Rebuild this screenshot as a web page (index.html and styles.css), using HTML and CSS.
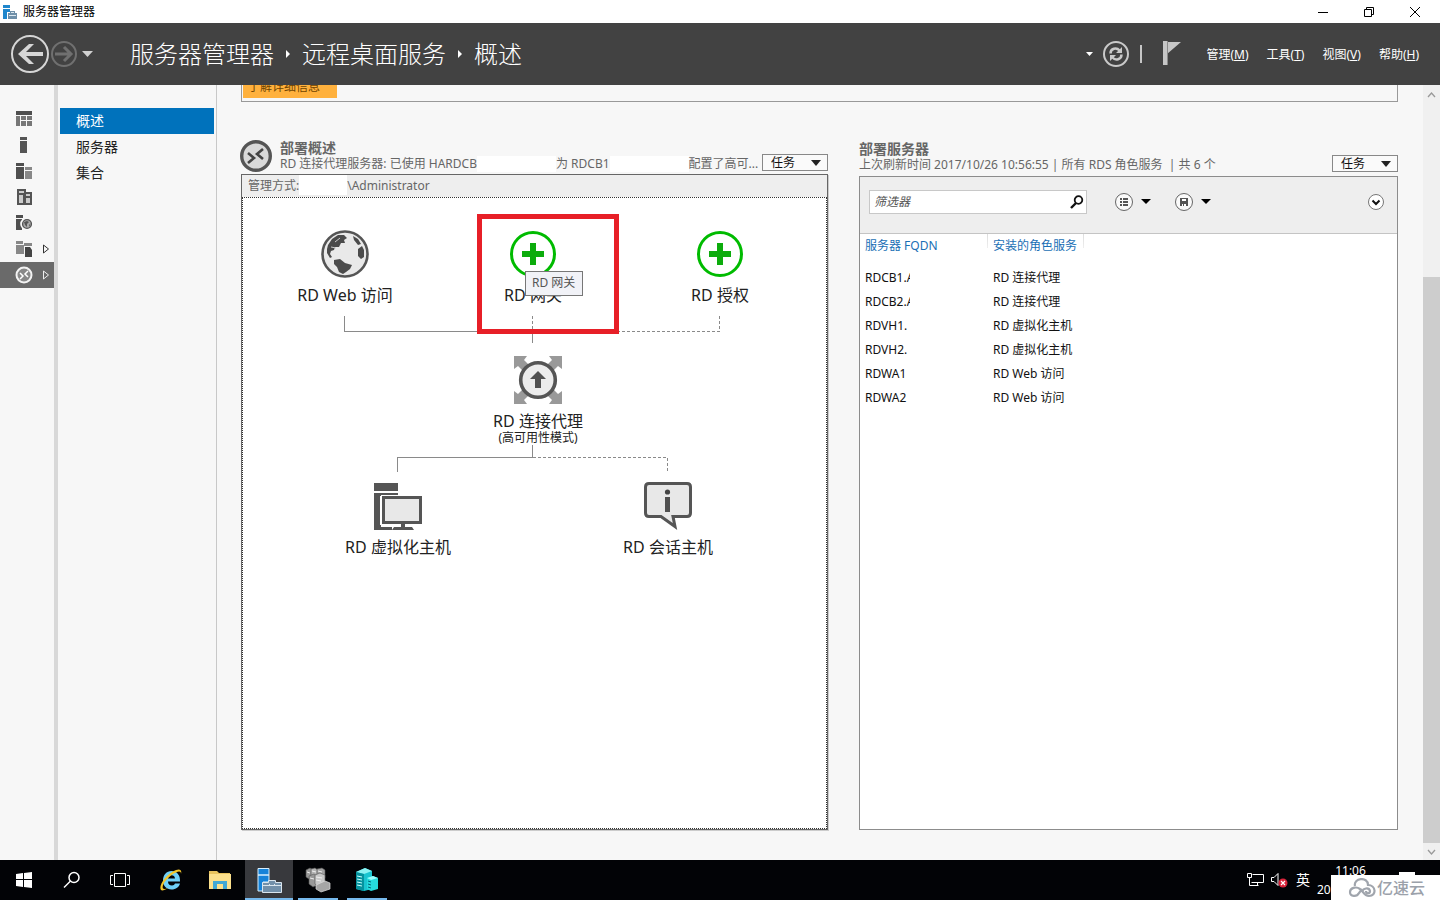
FILE: index.html
```html
<!DOCTYPE html>
<html lang="zh-CN">
<head>
<meta charset="utf-8">
<title>服务器管理器</title>
<link rel="stylesheet" href="styles.css">
</head>
<body>
<div class="window">
  <div class="titlebar">
    <svg class="app-icon" width="14" height="14" viewBox="0 0 14 14"><path fill="#1f86cc" d="M0 0h7v3H0zM0 4h7v3H4v7H0z"/><path fill="#6f8fa8" d="M5 8h2V6h5v2h2v6H5z"/><path fill="#dce8f0" d="M8 7h3v1H8zM6 10h7v1H6z"/></svg>
    <span class="window-title">服务器管理器</span>
    <div class="window-buttons">
      <button aria-label="最小化"><svg width="12" height="12" viewBox="0 0 12 12"><path d="M1 6.500h10" stroke="#000" fill="none"/></svg></button>
      <button aria-label="还原"><svg width="12" height="12" viewBox="0 0 12 12"><path d="M1.500 3.500h7v7h-7zM3.500 3.500v-2h7v7h-2" stroke="#000" fill="none"/></svg></button>
      <button aria-label="关闭"><svg width="12" height="12" viewBox="0 0 12 12"><path d="M1 1l10 10M11 1L1 11" stroke="#000" fill="none"/></svg></button>
    </div>
  </div>

  <header class="header">
    <div class="nav-buttons">
      <button aria-label="后退"><svg width="40" height="40" viewBox="0 0 40 40"><circle cx="20" cy="20" r="18" fill="none" stroke="#d6d6d6" stroke-width="2"/><path d="M19 10h5l-8 8h17v4H16l8 8h-5L8 20z" fill="#d6d6d6"/></svg></button>
      <button aria-label="前进"><svg width="28" height="28" viewBox="0 0 28 28"><circle cx="14" cy="14" r="12" fill="none" stroke="#707070" stroke-width="2"/><path d="M5 14h16M14 7l7 7-7 7" fill="none" stroke="#707070" stroke-width="3"/></svg></button>
      <button class="history" aria-label="历史记录"><svg width="12" height="8" viewBox="0 0 12 8"><path d="M0 1h11L5.500 7z" fill="#d0d0d0"/></svg></button>
    </div>
    <nav class="breadcrumb" aria-label="位置">
      <span>服务器管理器</span>
      <svg width="6" height="8" viewBox="0 0 6 8"><path d="M1 0l4 4-4 4z" fill="#fff"/></svg>
      <span>远程桌面服务</span>
      <svg width="6" height="8" viewBox="0 0 6 8"><path d="M1 0l4 4-4 4z" fill="#fff"/></svg>
      <span>概述</span>
    </nav>
    <div class="header-tools">
      <svg width="8" height="6" viewBox="0 0 8 6"><path d="M0 1h7L3.500 5z" fill="#fff"/></svg>
      <button aria-label="刷新"><svg width="28" height="28" viewBox="0 0 28 28"><circle cx="14" cy="14" r="12" fill="none" stroke="#c9c9c9" stroke-width="2"/><path d="M8.500 13.500c0-5 6-6.500 9-3M19.500 14.500c0 5-6 6.500-9 3" fill="none" stroke="#c9c9c9" stroke-width="2.500"/><path d="M20 7v6h-6zM8 21v-6h6z" fill="#c9c9c9"/></svg></button>
      <span class="divider"></span>
      <button class="flag" aria-label="通知"><svg width="18" height="26" viewBox="0 0 18 26"><path d="M0 0h4v24H0zM4 1h14L4 13z" fill="#c6c6c6"/><path d="M4.500 0v24" stroke="#8a8a8a"/></svg></button>
    </div>
    <div class="menus">
      <button>管理(<u>M</u>)</button>
      <button>工具(<u>T</u>)</button>
      <button>视图(<u>V</u>)</button>
      <button>帮助(<u>H</u>)</button>
    </div>
  </header>

  <div class="body">
    <nav class="rail" aria-label="角色">
      <button aria-label="仪表板"><svg width="16" height="16" viewBox="0 0 16 16"><path fill="#4f4f4f" d="M0 0h16v4H0z"/><path fill="#777" d="M0 5h4v10H0zM5 5h5v4H5zM11 5h5v4h-5zM5 10h5v5H5zM11 10h5v5h-5z"/></svg></button>
      <button aria-label="本地服务器"><svg width="16" height="16" viewBox="0 0 16 16"><path fill="#555" d="M4 0h7v3H4zM4 4h7v12H4z"/></svg></button>
      <button aria-label="所有服务器"><svg width="16" height="16" viewBox="0 0 16 16"><path fill="#4f4f4f" d="M0 0h8v3H0zM0 4h8v12H0z"/><path fill="#888" d="M9 4h7v3H9zM9 8h7v8H9z"/></svg></button>
      <button aria-label="AD DS"><svg width="16" height="16" viewBox="0 0 16 16"><path fill="#555" d="M1 0h9v3h6v13H1z"/><path fill="#ccc" d="M3 2h5v2H3zM3 6h4v8H3zM10 5h4v2h-4zM10 9h4v5h-4z"/></svg></button>
      <button aria-label="文件和存储"><svg width="16" height="16" viewBox="0 0 16 16"><path fill="#4f4f4f" d="M0 0h7v3H0zM0 4h6v11H0z"/><circle cx="10.500" cy="9" r="6.300" fill="#f7f7f7"/><circle cx="11" cy="9" r="4.400" fill="#aaa" stroke="#555" stroke-width="1.400"/><path fill="#555" d="M8 7l3-1 2 1-2 2v3l-2-2zM13 9l1 1-1 2z"/></svg></button>
      <button aria-label="文件服务" class="has-more"><svg width="16" height="16" viewBox="0 0 16 16"><path fill="#888" d="M0 0h7v3H0zM0 4h8v9H0zM8 2h8v4H8z"/><path fill="#f7f7f7" d="M8 5h8v11H8z"/><path fill="#444" d="M9 6h5l2 3v7H9z"/></svg><svg class="more" width="8" height="10" viewBox="0 0 8 10"><path d="M1.500 1l5 4-5 4z" fill="none" stroke="#333"/></svg></button>
      <button aria-label="远程桌面服务" class="has-more current"><svg width="18" height="18" viewBox="0 0 18 18"><circle cx="9" cy="9" r="7.500" fill="#888" stroke="#f3f3f3" stroke-width="2"/><path d="M5 7l3 3-3 3M13 5l-3 3 3 3" fill="none" stroke="#fff" stroke-width="1.500"/></svg><svg class="more" width="8" height="10" viewBox="0 0 8 10"><path d="M1.500 1l5 4-5 4z" fill="none" stroke="#eee"/></svg></button>
    </nav>

    <nav class="pages" aria-label="远程桌面服务">
      <a href="#overview" class="current">概述</a>
      <a href="#servers">服务器</a>
      <a href="#collections">集合</a>
    </nav>

    <main class="content">
      <div class="banner"><button>了解详细信息</button></div>
      <div class="columns">
        <section class="overview">
          <div class="section-head">
            <svg class="section-icon" width="32" height="32" viewBox="0 0 32 32"><circle cx="16" cy="16" r="14.300" fill="#d9d9d9" stroke="#555" stroke-width="3.400"/><path d="M8 13l6 5-6 5M23 9l-6 5 6 5" fill="none" stroke="#444" stroke-width="2.600"/></svg>
            <div class="section-text">
              <h2>部署概述</h2>
              <p>RD 连接代理服务器: 已使用 HARDCB<span class="blank wide"></span>为 RDCB1<span class="blank wide"></span>配置了高可...</p>
            </div>
            <button class="tasks">任务<svg width="10" height="6" viewBox="0 0 10 6"><path d="M0 0h10L5 6z" fill="#222"/></svg></button>
          </div>
          <div class="panel overview-panel">
            <div class="manage">管理方式:<span class="blank small"></span>\Administrator</div>
            <div class="diagram">
              <svg class="wires" width="500" height="290" viewBox="0 0 500 290" fill="none" stroke="#8a8a8a" shape-rendering="crispEdges">
                <path d="M101.500 118v15.500H289.500V145M289.500 247v12.500H154.500V274"/>
                <path d="M289.500 118v15M476.500 118v15.500H290M290 259.500H424.500V274" stroke-dasharray="3 2"/>
              </svg>
              <div class="node web">
                <svg width="48" height="48" viewBox="0 0 48 48"><circle cx="24" cy="24" r="22.500" fill="#e9e9e9" stroke="#555" stroke-width="2.600"/><g fill="#4b4b4b"><path d="M7 15l4-6 6-4 6 0 3 3-3 2 1 3-4 0-2 4-4 0-1 3-3 1-1 3 2 3-2 1-3-5 0-4z"/><path d="M13 30l6-1 5 4 7 2-2 4-4 3-3 2-4-2-2-5-3-3z"/><path d="M32 6l5 3 3 5-3 1-4-5zM37 19l4-3 2 4v7l-3 2-3-3z"/></g><path d="M14 12l5-4M10 17l5 1" stroke="#ccc"/></svg>
                <span>RD Web 访问</span>
              </div>
              <div class="node gateway">
                <svg width="48" height="48" viewBox="0 0 48 48"><circle cx="24" cy="24" r="21.500" fill="#fff" stroke="#0b0" stroke-width="3"/><path d="M21 13h6v8h8v6h-8v8h-6v-8h-8v-6h8z" fill="#0cac0c"/></svg>
                <span>RD 网关</span>
              </div>
              <div class="node licence">
                <svg width="48" height="48" viewBox="0 0 48 48"><circle cx="24" cy="24" r="21.500" fill="#fff" stroke="#0b0" stroke-width="3"/><path d="M21 13h6v8h8v6h-8v8h-6v-8h-8v-6h8z" fill="#0cac0c"/></svg>
                <span>RD 授权</span>
              </div>
              <div class="node broker">
                <svg width="48" height="48" viewBox="0 0 48 48"><path fill="#999" d="M0 0h13l-3 4 8 8-6 6-8-8-4 3zM48 0v13l-4-3-8 8-6-6 8-8-3-4zM0 48V35l4 3 8-8 6 6-8 8 3 4zM48 48H35l3-4-8-8 6-6 8 8 4-3z"/><circle cx="24" cy="24" r="17.300" fill="#ececec" stroke="#555" stroke-width="3.600"/><path d="M24 15l8 8h-5v9h-6v-9h-5z" fill="#505050"/></svg>
                <span>RD 连接代理</span><small>(高可用性模式)</small>
              </div>
              <div class="node virtual">
                <svg width="48" height="48" viewBox="0 0 48 48"><path fill="#555" d="M0 1h24v8H0zM0 11h24v3H6v29h12v5H0z"/><path fill="#fff" d="M7 13h41v32H7z"/><path fill="#555" d="M8 14h40v28H31v3h7l2 3H18l2-3h7v-3H8z"/><path fill="#e8e8e8" d="M11 17h34v22H11z"/></svg>
                <span>RD 虚拟化主机</span>
              </div>
              <div class="node session">
                <svg width="48" height="48" viewBox="0 0 48 48"><path d="M5 1.500h38q3.500 0 3.500 3.500v26q0 3.500-3.500 3.500H29l2 10-14-10H5q-3.500 0-3.500-3.500V5q0-3.500 3.500-3.500z" fill="#e8e8e8" stroke="#555" stroke-width="3"/><circle cx="23.500" cy="10" r="2.600" fill="#444"/><path d="M21 15h5v15h-5z" fill="#505050"/></svg>
                <span>RD 会话主机</span>
              </div>
              <div class="highlight"></div>
              <div class="tooltip" role="tooltip">RD 网关</div>
            </div>
          </div>
        </section>

        <section class="servers">
          <div class="section-head">
            <div class="section-text">
              <h2>部署服务器</h2>
              <p>上次刷新时间 2017/10/26 10:56:55 | 所有 RDS 角色服务&nbsp; | 共 6 个</p>
            </div>
            <button class="tasks">任务<svg width="10" height="6" viewBox="0 0 10 6"><path d="M0 0h10L5 6z" fill="#222"/></svg></button>
          </div>
          <div class="panel">
            <div class="toolbar">
              <div class="search">
                <input type="text" placeholder="筛选器" aria-label="筛选器">
                <svg width="14" height="14" viewBox="0 0 14 14"><circle cx="8.500" cy="5" r="3.800" fill="none" stroke="#111" stroke-width="1.800"/><path d="M6 8l-5 5" stroke="#111" stroke-width="2.400"/></svg>
              </div>
              <button class="tool" aria-label="查询条件"><svg width="20" height="20" viewBox="0 0 20 20"><circle cx="10" cy="10" r="8.500" fill="#fafafa" stroke="#666"/><path fill="#555" d="M6 6h2v2H6zM6 9h2v2H6zM6 12h2v2H6zM9 6h5v2H9zM9 9h5v2H9zM9 12h5v2H9z"/></svg><svg width="10" height="6" viewBox="0 0 10 6"><path d="M0 0h10L5 5z"/></svg></button>
              <button class="tool" aria-label="保存查询"><svg width="20" height="20" viewBox="0 0 20 20"><circle cx="10" cy="10" r="8.500" fill="#fafafa" stroke="#666"/><path fill="#555" d="M6 6h8v8H6z"/><path fill="#fff" d="M8 7h4v2H8zM8 12h1v2H8zM10 12h2v2h-2z"/></svg><svg width="10" height="6" viewBox="0 0 10 6"><path d="M0 0h10L5 5z"/></svg></button>
              <button class="expand" aria-label="展开"><svg width="18" height="18" viewBox="0 0 18 18"><circle cx="9" cy="9" r="7.500" fill="#fff" stroke="#777"/><path d="M5.500 7.500L9 11l3.500-3.500" fill="none" stroke="#111" stroke-width="2"/></svg></button>
            </div>
            <table>
              <thead><tr><th class="fqdn">服务器 FQDN</th><th class="role">安装的角色服务</th><th aria-label="其他"></th></tr></thead>
              <tbody>
                <tr><td><span class="cut">RDCB1.A</span></td><td>RD 连接代理</td><td></td></tr>
                <tr><td><span class="cut">RDCB2.A</span></td><td>RD 连接代理</td><td></td></tr>
                <tr><td>RDVH1.</td><td>RD 虚拟化主机</td><td></td></tr>
                <tr><td>RDVH2.</td><td>RD 虚拟化主机</td><td></td></tr>
                <tr><td>RDWA1</td><td>RD Web 访问</td><td></td></tr>
                <tr><td>RDWA2</td><td>RD Web 访问</td><td></td></tr>
              </tbody>
            </table>
          </div>
        </section>
      </div>
    </main>
    <div class="scrollbar">
      <svg width="9" height="6" viewBox="0 0 9 6"><path d="M1 5l3.500-4L8 5" fill="none" stroke="#999" stroke-width="1.300"/></svg>
      <div class="track"><div class="thumb"></div></div>
      <svg width="9" height="6" viewBox="0 0 9 6"><path d="M1 1l3.500 4L8 1" fill="none" stroke="#999" stroke-width="1.300"/></svg>
    </div>
  </div>

  <footer class="taskbar">
    <div class="system">
      <button aria-label="开始"><svg width="16" height="16" viewBox="0 0 16 16"><path fill="#fff" d="M0 2l7-1v6H0zM8 1l8-1v7H8zM0 8h7v7l-7-1zM8 8h8v8l-8-1z"/></svg></button>
      <button aria-label="搜索"><svg width="18" height="18" viewBox="0 0 18 18"><circle cx="11" cy="6.500" r="5" fill="none" stroke="#fff" stroke-width="1.500"/><path d="M7.500 10L1 16.500" stroke="#fff" stroke-width="1.500"/></svg></button>
      <button aria-label="任务视图"><svg width="22" height="16" viewBox="0 0 22 16"><path d="M5.500 1.500h11v13h-11zM4 3.500H1.500v9H4M18 3.500h2.500v9H18" fill="none" stroke="#fff"/></svg></button>
    </div>
    <div class="apps">
      <button aria-label="Internet Explorer"><svg width="24" height="24" viewBox="0 0 24 24"><path d="M21 15.500c-1 3.500-4 6-8.500 6-5 0-8.500-3.500-8.500-9S7.500 3 12.500 3s9 4 8.500 10.500H9c0 2.500 1.500 4 4 4 1.500 0 2.500-.7 3-2zM9 10.500h7c-.2-2-1.500-3.200-3.500-3.200S9.200 8.500 9 10.500z" fill="#6fd0f7"/><path d="M2 22C-1 18 7 6 17 2c4-1.500 6 0 5 4 0-3-2-3-5-1.500C9 8 2 17 4 20.500c1 1 3 .3 5-.8-3 2.500-6 3.300-7 2.300z" fill="#f3c62b"/></svg></button>
      <button aria-label="文件资源管理器"><svg width="22" height="20" viewBox="0 0 22 20"><path fill="#e8c35d" d="M0 1h8l2 2h11v7H0z"/><path fill="#fbe08c" d="M0 4h22v15H0z"/><path fill="#40a8d5" d="M4 11h14v8h-4v-5H8v5H4z"/></svg></button>
      <button class="active" aria-label="服务器管理器"><svg width="25" height="25" viewBox="0 0 25 25"><path fill="#1683d9" stroke="#d7efff" d="M1 .5h11V7H1zM1 7h11v7H6v9H1z"/><path fill="#7290aa" stroke="#d9e5ee" d="M5.500 14.500h6v-2h7v2h6v10h-19z"/><path d="M6 17.500h18M12.500 16v2M17.500 16v2" stroke="#d9e5ee"/></svg></button>
      <button class="running" aria-label="服务器工具"><svg width="26" height="26" viewBox="0 0 26 26"><g fill="#999" stroke="#555" stroke-width=".6"><path d="M1 3l4-2 3 2v7l-4 2-3-2z"/><path fill="#b4b4b4" d="M6 2l4-1 3 2v8l-4 2-3-2z"/><path fill="#a4a4a4" d="M12 2l5-1 3 2v8l-5 2-3-2z"/><path d="M4 9l5-2 3 2v9l-4 2-4-3z"/><path fill="#c8c8c8" d="M10 8l5-2 5 2v10l-6 2-4-3z"/></g><path d="M2 5l3 1M7 4l4 1M13 4l4 1M5 11l4 1M11 10l6 1M11 13l5 1" stroke="#eee"/><path fill="#a6a6a6" stroke="#ddd" stroke-width=".7" d="M11 18l9-4 5 2v6l-9 3-5-3z"/></svg></button>
      <button class="running" aria-label="群集管理器"><svg width="24" height="24" viewBox="0 0 24 24"><path fill="#19c5d0" d="M1 4l9-4 7 3v18l-8 2-8-2z"/><path fill="#8cf2f2" d="M1 4l9-4 7 3-8 3z"/><path fill="#06929d" d="M9 6v17l-8-2V4z"/><path d="M2 8l5 1M2 11l5 1M2 14l5 1M2 17l5 1" stroke="#c6ffff"/><path fill="#26dadd" d="M12 10l6-2 5 2v11l-7 2-4-2z"/><path fill="#9ff" d="M12 10l6-2 5 2-7 2z"/><path d="M13 13l3 1M13 16l3 1M13 19l3 1" stroke="#067"/></svg></button>
    </div>
    <div class="tray">
      <svg width="17" height="16" viewBox="0 0 17 16" fill="none" stroke="#fff"><path d="M5.500 2.500h11v8H4.500M.5 1.500h4v4h-4zM2.500 6v7.500h9M10.500 11v2"/></svg>
      <svg width="17" height="16" viewBox="0 0 17 16"><path d="M.5 5.500H3l4-4v12l-4-4H.5z" fill="none" stroke="#fff"/><circle cx="12" cy="11" r="4.500" fill="#d9243b"/><path d="M10 9l4 4M14 9l-4 4" stroke="#fff" stroke-width="1.200"/></svg>
      <span class="ime">英</span>
      <div class="clock"><time>11:06</time><span>20</span></div>
    </div>
    <div class="notice"></div>
    <div class="watermark">
      <svg width="28" height="20" viewBox="0 0 28 20" fill="none" stroke="#a0a5ad" stroke-width="2.200"><path d="M7 8C5 0 20-2 20 7c8 0 9 11 1 11-5 0-6-5-9-7-4-3-10-1-10 3 0 5 7 5 9 1l3-4"/><path d="M14 14c1-4 7-5 8-1 0 3-4 3-4 0"/></svg>
      <span>亿速云</span>
    </div>
  </footer>
</div>
</body>
</html>
```
FILE: styles.css
```css
* { box-sizing: border-box; }
body {
  margin: 0;
  font: 12px/16px "Noto Sans", "Noto Sans CJK SC", sans-serif;
  color: #222;
  background: #f7f7f7;
}
button {
  margin: 0;
  padding: 0;
  border: 0;
  background: none;
  font: inherit;
  color: inherit;
  display: flex;
  align-items: center;
  justify-content: center;
}
svg { display: block; flex: none; }
h2, p { margin: 0; }

.window { display: flex; flex-direction: column; height: 100vh; }

.titlebar { display: flex; align-items: center; flex: 0 0 23px; padding-left: 3px; background: #fff; }
.window-title { margin-left: 6px; color: #000; }
.window-buttons { display: flex; margin-left: auto; padding-right: 2px; }
.window-buttons button { width: 46px; height: 20px; }

.header { display: flex; align-items: center; flex: 0 0 62px; padding: 0 21px 0 10px; background: #424242; color: #fff; }
.nav-buttons { display: flex; align-items: center; }
.history { margin-left: 4px; }
.breadcrumb { display: flex; align-items: center; gap: 11px; margin-left: 36px; font-size: 24px; line-height: 32px; font-weight: 300; white-space: nowrap; }
.header-tools { display: flex; align-items: center; margin-left: auto; }
.header-tools > button:first-of-type { margin-left: 8px; }
.divider { width: 2px; height: 18px; margin: 0 21px 0 10px; background: #c6c6c6; }
.menus { display: flex; gap: 18px; margin-left: 25px; padding-top: 2px; white-space: nowrap; }
.menus button { display: block; }

.body { display: flex; flex: 1; min-height: 0; }
.rail { display: flex; flex-direction: column; flex: 0 0 58px; padding-top: 21px; border-right: 4px solid #d8d8d8; }
.rail button { position: relative; width: 100%; height: 26px; padding-right: 6px; }
.rail .current { background: #6a6a6a; }
.rail .more { position: absolute; right: 4px; top: 8px; }
.pages { display: flex; flex-direction: column; flex: 0 0 159px; padding: 23px 2px 0; border-right: 1px solid #c8c8c8; font-size: 14px; line-height: 26px; }
.pages a { padding-left: 16px; color: #222; text-decoration: none; }
.pages .current { background: #0072bc; color: #fff; }

.content { display: flex; flex-direction: column; flex: 1; min-width: 0; padding: 0 25px 30px 24px; }
.banner { display: flex; align-items: flex-end; flex: 0 0 17px; overflow: hidden; padding: 0 0 3px 1px; border: 1px solid #999; border-top: 0; }
.banner button { align-items: flex-start; width: 94px; height: 24px; background: #ffb13d; color: #704400; padding-top: 5px; padding-right: 12px; }
.columns { display: flex; flex: 1; gap: 31px; min-height: 0; padding-top: 37px; }
.columns section { display: flex; flex-direction: column; min-width: 0; }
.overview { flex: 587 1 0; }
.servers { flex: 539 1 0; }
.section-head { display: flex; align-items: flex-end; color: #666; padding-bottom: 3px; }
.overview .section-head { height: 35px; padding-bottom: 2px; }
.servers .section-head { height: 37px; }
.section-icon { margin: 0 8px 0 -1px; }
.section-text { flex: 1; min-width: 0; white-space: nowrap; }
.section-text h2 { font-size: 14px; line-height: 16px; }
.blank { display: inline-block; height: 16px; background: #fff; vertical-align: top; }
.wide { width: 79px; }
.small { width: 48px; height: 20px; }
.tasks { flex: 0 0 66px; height: 17px; margin-bottom: 1px; padding: 0 6px 0 8px; border: 1px solid #888; background: #fafafa; color: #111; justify-content: space-between; }

.panel { display: flex; flex-direction: column; flex: 1; min-height: 0; border: 1px solid #8c8c8c; background: #fff; }
.overview-panel { border-color: #666; box-shadow: 1px 1px 0 #ccc; }
.manage { flex: 0 0 21px; padding-left: 6px; line-height: 22px; background: #eee; color: #666; }
.diagram { position: relative; flex: 1; border: 1px dotted #333; }
.wires { position: absolute; left: 0; top: 0; }
.node { position: absolute; display: flex; flex-direction: column; align-items: center; width: 140px; font-size: 16px; line-height: 20px; white-space: nowrap; }
.node svg { margin-bottom: 7px; }
.node small { font-size: 12px; line-height: 14px; }
.web { left: 32px; top: 32px; }
.gateway { left: 220px; top: 32px; }
.licence { left: 407px; top: 32px; }
.broker { left: 225px; top: 158px; }
.virtual { left: 85px; top: 284px; }
.session { left: 355px; top: 284px; }
.highlight { position: absolute; left: 234px; top: 16px; width: 142px; height: 120px; border: 5px solid #e71f27; }
.tooltip { position: absolute; left: 282px; top: 73px; padding: 2px 7px 3px 6px; border: 1px solid #777; background: #f1f2f7; color: #555; line-height: 18px; white-space: nowrap; }

.toolbar { display: flex; align-items: center; flex: 0 0 57px; padding: 0 12px 7px 9px; background: #eee; border-bottom: 1px solid #c4c4c4; }
.search { display: flex; align-items: center; width: 218px; height: 24px; padding-right: 2px; border: 1px solid #c8c8c8; background: #fff; }
.search input { flex: 1; min-width: 0; padding: 0 4px; border: 0; outline: 0; background: none; font: inherit; font-style: italic; }
.search input::placeholder { color: #555; opacity: 1; }
.tool { gap: 7px; margin-left: 27px; }
.tool + .tool { margin-left: 23px; }
.expand { margin-left: auto; }
table { width: 100%; border-collapse: collapse; table-layout: fixed; color: #111; }
th { height: 24px; padding: 0 0 0 5px; font-weight: 400; text-align: left; color: #1a6fb5; background: linear-gradient(#ddd, #eee) right top / 1px 14px no-repeat; white-space: nowrap; }
th:last-child { background: none; }
.fqdn { width: 128px; }
.role { width: 96px; }
td { height: 24px; padding: 0 0 0 5px; white-space: nowrap; }
tbody::before { content: ""; display: block; height: 8px; }
.cut { display: block; width: 45px; overflow: hidden; }

.scrollbar { display: flex; flex-direction: column; align-items: center; flex: 0 0 17px; padding: 7px 0 5px; background: #f0f0f0; }
.track { display: flex; flex-direction: column; justify-content: flex-end; flex: 1; width: 100%; padding: 0 0 6px; }
.thumb { height: 76%; background: #cdcdcd; }

.taskbar { position: relative; display: flex; flex: 0 0 40px; background: #020306; color: #fff; }
.system, .apps { display: flex; }
.apps { gap: 1px; margin-left: 3px; }
.taskbar button { width: 48px; height: 40px; }
.apps .active { background: #38393d; border-bottom: 2px solid #76b9ed; border-top: 2px solid transparent; }
.apps .running { background: linear-gradient(#76b9ed, #76b9ed) center bottom / 40px 2px no-repeat; }
.tray { display: flex; align-items: center; gap: 7px; margin-left: auto; padding-right: 56px; }
.ime { font-size: 14px; margin-left: 1px; }
.clock { display: flex; flex-direction: column; align-self: stretch; width: 67px; padding-top: 1px; line-height: 19px; }
.clock time { text-align: center; }
.notice { position: absolute; right: 25px; bottom: 22px; width: 16px; height: 6px; background: #fff; }
.watermark { position: absolute; right: 0; bottom: 0; display: flex; align-items: center; gap: 1px; width: 109px; height: 25px; padding-left: 17px; background: #fff; color: #9ba1aa; font-size: 16px; font-weight: 500; }
```
